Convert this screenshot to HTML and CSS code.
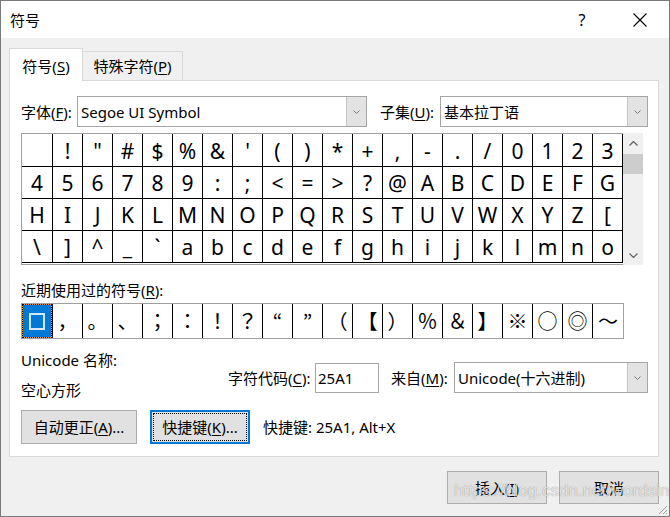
FILE: index.html
```html
<!DOCTYPE html>
<html lang="zh-CN">
<head>
<meta charset="utf-8">
<title>符号</title>
<link rel="stylesheet" href="styles.css">
</head>
<body>
<div class="window">
  <div class="titlebar">
    <span class="title">符号</span>
    <span class="tb-btn tb-help">?</span>
    <span class="tb-btn tb-close"><svg width="14" height="14" viewBox="0 0 14 14"><path d="M0.5 0.5 L13.5 13.5 M13.5 0.5 L0.5 13.5" stroke="#000" stroke-width="1.1" fill="none"/></svg></span>
  </div>
  <div class="client">
    <div class="tabs">
      <div class="tab active">符号(<span class="mn">S</span>)</div>
      <div class="tab">特殊字符(<span class="mn">P</span>)</div>
    </div>
    <div class="panel">
      <div class="font-row">
        <span class="lbl-font">字体(<span class="mn">F</span>):</span>
        <div class="combo font-combo"><span class="combo-text">Segoe UI Symbol</span><span class="combo-btn"><svg width="7" height="4" viewBox="0 0 7 4"><path d="M0.5 0.5 L3.5 3.5 L6.5 0.5" fill="none" stroke="#7a7a7a"/></svg></span></div>
        <span class="lbl-subset">子集(<span class="mn">U</span>):</span>
        <div class="combo subset-combo"><span class="combo-text">基本拉丁语</span><span class="combo-btn"><svg width="7" height="4" viewBox="0 0 7 4"><path d="M0.5 0.5 L3.5 3.5 L6.5 0.5" fill="none" stroke="#7a7a7a"/></svg></span></div>
      </div>
      <div class="charmap">
        <div class="cells">
          <span class="cell"> </span><span class="cell">!</span><span class="cell">&quot;</span><span class="cell">#</span><span class="cell">$</span><span class="cell">%</span><span class="cell">&amp;</span><span class="cell">'</span><span class="cell">(</span><span class="cell">)</span><span class="cell">*</span><span class="cell">+</span><span class="cell">,</span><span class="cell">-</span><span class="cell">.</span><span class="cell">/</span><span class="cell">0</span><span class="cell">1</span><span class="cell">2</span><span class="cell">3</span>
          <span class="cell">4</span><span class="cell">5</span><span class="cell">6</span><span class="cell">7</span><span class="cell">8</span><span class="cell">9</span><span class="cell">:</span><span class="cell">;</span><span class="cell">&lt;</span><span class="cell">=</span><span class="cell">&gt;</span><span class="cell">?</span><span class="cell">@</span><span class="cell">A</span><span class="cell">B</span><span class="cell">C</span><span class="cell">D</span><span class="cell">E</span><span class="cell">F</span><span class="cell">G</span>
          <span class="cell">H</span><span class="cell">I</span><span class="cell">J</span><span class="cell">K</span><span class="cell">L</span><span class="cell">M</span><span class="cell">N</span><span class="cell">O</span><span class="cell">P</span><span class="cell">Q</span><span class="cell">R</span><span class="cell">S</span><span class="cell">T</span><span class="cell">U</span><span class="cell">V</span><span class="cell">W</span><span class="cell">X</span><span class="cell">Y</span><span class="cell">Z</span><span class="cell">[</span>
          <span class="cell">\</span><span class="cell">]</span><span class="cell">^</span><span class="cell">_</span><span class="cell">`</span><span class="cell">a</span><span class="cell">b</span><span class="cell">c</span><span class="cell">d</span><span class="cell">e</span><span class="cell">f</span><span class="cell">g</span><span class="cell">h</span><span class="cell">i</span><span class="cell">j</span><span class="cell">k</span><span class="cell">l</span><span class="cell">m</span><span class="cell">n</span><span class="cell">o</span>
        </div>
        <div class="vscroll">
          <span class="sb-arrow"><svg width="9" height="5" viewBox="0 0 9 5"><path d="M0.5 4.5 L4.5 0.5 L8.5 4.5" fill="none" stroke="#606060" stroke-width="1.2"/></svg></span>
          <span class="sb-thumb"></span>
          <span class="sb-space"></span>
          <span class="sb-arrow"><svg width="9" height="5" viewBox="0 0 9 5"><path d="M0.5 0.5 L4.5 4.5 L8.5 0.5" fill="none" stroke="#606060" stroke-width="1.2"/></svg></span>
        </div>
      </div>
      <div class="recent-label">近期使用过的符号(<span class="mn">R</span>):</div>
      <div class="recent">
        <span class="rc"><span class="sel"><span class="sq"></span></span></span><span class="rc">，</span><span class="rc">。</span><span class="rc">、</span><span class="rc">；</span><span class="rc">：</span><span class="rc">！</span><span class="rc">？</span><span class="rc">“</span><span class="rc">”</span><span class="rc">（</span><span class="rc">【</span><span class="rc">）</span><span class="rc">％</span><span class="rc">＆</span><span class="rc">】</span><span class="rc">※</span><span class="rc">○</span><span class="rc">◎</span><span class="rc">～</span>
      </div>
      <div class="info">
        <div class="info-left">
          <div class="line">Unicode 名称:</div>
          <div class="line line2">空心方形</div>
        </div>
        <div class="info-code">
          <span class="lbl-code">字符代码(<span class="mn">C</span>):</span>
          <span class="input">25A1</span>
          <span class="lbl-from">来自(<span class="mn">M</span>):</span>
          <div class="combo from-combo"><span class="combo-text">Unicode(十六进制)</span><span class="combo-btn"><svg width="7" height="4" viewBox="0 0 7 4"><path d="M0.5 0.5 L3.5 3.5 L6.5 0.5" fill="none" stroke="#7a7a7a"/></svg></span></div>
        </div>
      </div>
      <div class="btn-row">
        <span class="btn btn-auto">自动更正(<span class="mn">A</span>)...</span>
        <span class="btn btn-key"><span class="focus">快捷键(<span class="mn">K</span>)...</span></span>
        <span class="key-info">快捷键: 25A1, Alt+X</span>
      </div>
    </div>
    <div class="footer">
      <span class="btn btn-foot">插入(<span class="mn">I</span>)</span>
      <span class="btn btn-foot">取消</span>
    </div>
  </div>
  <div class="watermark">https://blog.csdn.net/wordsin</div>
  <svg class="grip" width="12" height="12" viewBox="0 0 12 12"><path d="M11 3 L3 11 M11 7 L7 11 M11 10 L10 11" stroke="#9a9a9a" stroke-width="1" fill="none"/></svg>
</div>
</body>
</html>
```
FILE: styles.css
```css
* { box-sizing: border-box; }
html, body { margin: 0; padding: 0; }
body {
  width: 670px;
  height: 517px;
  overflow: hidden;
  background: #f0f0f0;
  font-family: "Noto Sans", "Noto Sans CJK SC", sans-serif;
  font-size: 15px;
  line-height: 20px;
  color: #000;
}
.window {
  position: relative;
  width: 670px;
  height: 517px;
  border: 1px solid #7a7a7a;
  background: #f0f0f0;
  display: flex;
  flex-direction: column;
}
.mn { text-decoration: underline; text-underline-offset: 2px; text-decoration-thickness: 1px; }

/* title bar */
.titlebar {
  flex: none;
  height: 37px;
  background: #fff;
  display: flex;
  align-items: center;
}
.title { padding-left: 9px; }
.tb-btn {
  width: 58px;
  height: 37px;
  display: flex;
  align-items: center;
  justify-content: center;
}
.tb-help { margin-left: auto; font-size: 16px; }

/* client */
.client {
  flex: 1;
  padding: 10px 10px 0 8px;
  display: flex;
  flex-direction: column;
}
.tabs {
  display: flex;
  align-items: flex-end;
  height: 33px;
  margin-bottom: -1px;
}
.tab {
  width: 100px;
  height: 30px;
  border: 1px solid #d9d9d9;
  border-left: none;
  border-bottom: none;
  display: flex;
  align-items: center;
  justify-content: center;
  padding-bottom: 1px;
}
.tab.active {
  width: 74px;
  height: 33px;
  border-left: 1px solid #d9d9d9;
  background: #fff;
  position: relative;
  z-index: 1;
  padding-top: 2px;
}
.panel {
  height: 377px;
  background: #fff;
  border: 1px solid #d9d9d9;
  padding: 15px 0 0 11px;
}

/* font row */
.font-row { display: flex; align-items: center; height: 31px; }
.lbl-font { width: 56px; }
.lbl-subset { width: 60px; margin-left: 13px; }
.combo {
  height: 31px;
  border: 1px solid #a6a6a6;
  background: #fff;
  display: flex;
}
.combo-text { flex: 1; padding-left: 3px; display: flex; align-items: center; white-space: nowrap; }
.combo-btn {
  width: 20px;
  border-left: 1px solid #c4c4c4;
  background: #e3e3e3;
  display: flex;
  align-items: center;
  justify-content: center;
}
.font-combo { width: 290px; }
.subset-combo { width: 208px; }

/* character map */
.charmap { display: flex; margin-top: 6px; height: 132px; }
.cells {
  width: 602px;
  border: 1px solid #a0a0a0;
  border-right: none;
  padding-bottom: 1px;
  display: grid;
  grid-template-columns: 31px repeat(19, 30px);
  grid-template-rows: 33px 32px 32px 32px;
}
.cell {
  border-right: 1px solid #000;
  border-bottom: 1px solid #000;
  display: flex;
  align-items: center;
  justify-content: center;
  font-family: "Noto Sans", sans-serif;
  font-size: 21px;
  line-height: 28px;
  padding-top: 1px;
}
.vscroll { width: 20px; background: #f0f0f0; display: flex; flex-direction: column; }
.sb-arrow { height: 20px; display: flex; align-items: center; justify-content: center; }
.sb-thumb { height: 20px; margin-top: 1px; background: #cdcdcd; }
.sb-space { flex: 1; }

/* recent */
.recent-label { margin-top: 15px; }
.recent {
  margin-top: 3px;
  width: 603px;
  height: 36px;
  border: 1px solid #a0a0a0;
  display: flex;
}
.rc {
  width: 30px;
  border-right: 1px solid #000;
  display: flex;
  align-items: center;
  justify-content: center;
  font-family: "Noto Sans CJK JP", sans-serif;
  font-size: 20px;
}
.rc:first-child { width: 31px; }
.rc:last-child { border-right: none; }
.sel {
  align-self: stretch;
  flex: 1;
  border: 1px dotted #000;
  background: linear-gradient(#0078d7, #0078d7) padding-box, linear-gradient(#f2a019, #f2a019) border-box;
  display: flex;
  align-items: center;
  justify-content: center;
}
.sq { width: 16px; height: 17px; border: 2px solid #d6e7f8; }

/* info */
.info { display: flex; margin-top: 11px; }
.info-left { width: 207px; }
.line2 { margin-top: 10px; }
.info-code { display: flex; align-items: center; margin-top: 12px; height: 31px; }
.lbl-code { width: 87px; }
.input {
  width: 64px;
  height: 30px;
  border: 1px solid #a6a6a6;
  padding-left: 2px;
  display: flex;
  align-items: center;
  background: #fff;
}
.lbl-from { width: 63px; margin-left: 12px; }
.from-combo { width: 194px; }

/* buttons */
.btn-row { display: flex; align-items: center; margin-top: 10px; }
.btn {
  height: 34px;
  border: 1px solid #adadad;
  background: #e1e1e1;
  display: flex;
  align-items: center;
  justify-content: center;
}
.btn-auto { width: 116px; }
.btn-key { width: 100px; margin-left: 13px; border: 2px solid #0078d7; padding: 1px; }
.focus {
  flex: 1;
  align-self: stretch;
  border: 1px dotted #000;
  display: flex;
  align-items: center;
  justify-content: center;
}
.key-info { margin-left: 13px; }

.footer { display: flex; justify-content: flex-end; gap: 12px; margin-top: 14px; }
.btn-foot { width: 100px; height: 33px; }

.watermark {
  position: absolute;
  left: 453px;
  top: 479px;
  font-family: "Liberation Sans", sans-serif;
  font-size: 17px;
  line-height: 22px;
  color: rgba(255, 255, 255, 0.75);
  text-shadow: 0 0 1px rgba(0, 0, 0, 0.45);
  white-space: nowrap;
}
.grip { position: absolute; right: 1px; bottom: 1px; }
```
